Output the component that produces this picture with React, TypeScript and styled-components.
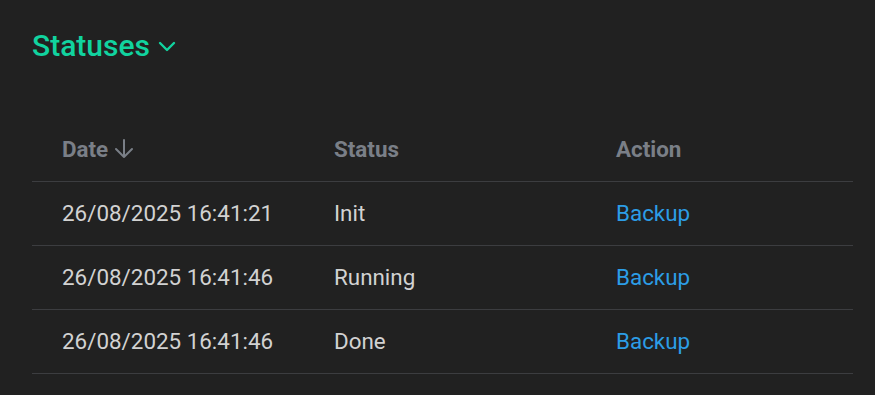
import React from "react";
import styled, { createGlobalStyle } from "styled-components";

const GlobalStyle = createGlobalStyle`
    html, body {
        margin: 0;
        padding: 0;
        background: #212121;
    }
    body {
        font-family: Roboto, "Liberation Sans", sans-serif;
    }
`;

const Page = styled.main`
    width: 875px;
    height: 395px;
    box-sizing: border-box;
    padding: 27px 22px 0 32px;
    background: #212121;
    overflow: hidden;
`;

const Heading = styled.h2`
    display: flex;
    align-items: center;
    gap: 7px;
    margin: 0 0 52px;
    font-size: 30px;
    font-weight: 500;
    line-height: 38px;
    color: #11d39f;
    cursor: pointer;
`;

const Table = styled.table`
    width: 100%;
    border-collapse: collapse;
    font-size: 22.4px;
`;

const HeadCell = styled.th<{ width: number }>`
    width: ${({ width }) => width}px;
    height: 64px;
    box-sizing: border-box;
    padding: 0 0 0 30px;
    text-align: left;
    font-weight: 700;
    color: #7a7f87;
    border-bottom: 1px solid #3c3d40;
`;

const HeadLabel = styled.span`
    display: inline-flex;
    align-items: center;
    gap: 5px;
`;

const Cell = styled.td`
    height: 64px;
    box-sizing: border-box;
    padding: 0 0 0 30px;
    color: #d2d2d2;
    border-bottom: 1px solid #3c3d40;
`;

const ActionLink = styled.a`
    color: #2c9de6;
    text-decoration: none;
    cursor: pointer;
`;

const rows = [
    { date: "26/08/2025 16:41:21", status: "Init" },
    { date: "26/08/2025 16:41:46", status: "Running" },
    { date: "26/08/2025 16:41:46", status: "Done" },
];

export default function App() {
    return (
        <>
            <GlobalStyle />
            <Page>
                <Heading>
                    Statuses
                    <svg width="20" height="20" viewBox="0 0 20 20" fill="none" stroke="currentColor" strokeWidth="2.4" strokeLinecap="round" strokeLinejoin="round">
                        <path d="M3 7l7 7 7-7" />
                    </svg>
                </Heading>
                <Table>
                    <thead>
                        <tr>
                            <HeadCell width={272}>
                                <HeadLabel>
                                    Date
                                    <svg width="22" height="22" viewBox="0 0 22 22" fill="none" stroke="currentColor" strokeWidth="2" strokeLinecap="round" strokeLinejoin="round">
                                        <path d="M11 2v17M3 11l8 8 8-8" />
                                    </svg>
                                </HeadLabel>
                            </HeadCell>
                            <HeadCell width={282}>Status</HeadCell>
                            <HeadCell width={267}>Action</HeadCell>
                        </tr>
                    </thead>
                    <tbody>
                        {rows.map((row, i) => (
                            <tr key={i}>
                                <Cell>{row.date}</Cell>
                                <Cell>{row.status}</Cell>
                                <Cell>
                                    <ActionLink>Backup</ActionLink>
                                </Cell>
                            </tr>
                        ))}
                    </tbody>
                </Table>
            </Page>
        </>
    );
}
